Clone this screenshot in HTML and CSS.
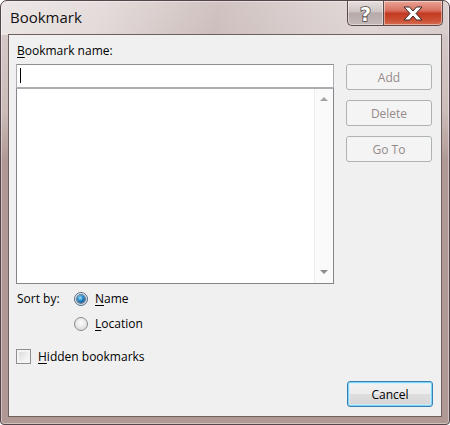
FILE: index.html
```html
<!DOCTYPE html>
<html>
<head>
  <meta name="viewport" content="width=device-width, initial-scale=1.0">
  <title>Bookmark</title>
  <link rel="stylesheet" href="styles.css">
</head>
<body>
  <div class="window">
    <div class="titlebar">
      <span class="title">Bookmark</span>
      <div class="caption-buttons">
        <button class="cap help">?</button>
        <button class="cap close">
          <svg width="22" height="15" viewBox="0 0 22 15">
            <path d="M2 1 H7.5 L11 5 L14.5 1 H20 L14 7.5 L20 14 H14.5 L11 10 L7.5 14 H2 L8 7.5 Z" fill="#fff" stroke="#3a2a28" stroke-width="1" stroke-linejoin="round"/>
          </svg>
        </button>
      </div>
    </div>

    <div class="client">
      <div class="main">
        <div class="left">
          <div class="field-label"><u>B</u>ookmark name:</div>
          <div class="name-input"><span class="caret"></span></div>
          <div class="listbox">
            <div class="scroll">
              <span class="arrow up"></span>
              <span class="arrow down"></span>
            </div>
          </div>
        </div>
        <div class="actions">
          <button class="btn" disabled>Add</button>
          <button class="btn" disabled>Delete</button>
          <button class="btn" disabled>Go To</button>
        </div>
      </div>

      <div class="sort">
        <span class="sort-label">Sort by:</span>
        <div class="radios">
          <label class="option"><span class="radio checked"></span><span><u>N</u>ame</span></label>
          <label class="option"><span class="radio"></span><span><u>L</u>ocation</span></label>
        </div>
      </div>

      <label class="option hidden-row"><span class="checkbox"></span><span><u>H</u>idden bookmarks</span></label>

      <div class="footer">
        <button class="btn default">Cancel</button>
      </div>
    </div>
  </div>
</body>
</html>
```

FILE: styles.css
```css
* {
  box-sizing: border-box;
}

body {
  margin: 0;
  font-family: "Open Sans", "Noto Sans", Arial, sans-serif;
  font-size: 12px;
  color: #000;
  background: #fff;
}

u {
  text-decoration: underline;
  text-underline-offset: 2px;
}

/* window frame */
.window {
  width: 450px;
  height: 425px;
  display: flex;
  flex-direction: column;
  border: 1px solid #54464a;
  border-radius: 7px 7px 4px 4px;
  box-shadow: inset 0 0 0 1px rgba(255, 255, 255, 0.4);
  background:
    linear-gradient(to bottom, rgba(255, 255, 255, 0.5) 0, rgba(255, 255, 255, 0.35) 110px, rgba(255, 255, 255, 0) 160px),
    linear-gradient(100deg, #d9cfcd 0%, #cbbcb9 22%, #a28884 48%, #b29d9a 62%, #c4b4b1 82%, #b5a19e 100%) top / 100% 34px no-repeat,
    #b09995;
  overflow: hidden;
}

.titlebar {
  height: 33px;
  display: flex;
  align-items: flex-start;
}

.title {
  padding: 7px 0 0 9px;
  font-size: 15px;
  line-height: 18px;
  color: #111;
}

.caption-buttons {
  margin-left: auto;
  margin-right: 6px;
  display: flex;
}

.cap {
  height: 25px;
  margin: 0;
  padding: 0;
  border: 1px solid #5d4b49;
  border-top: none;
  display: flex;
  align-items: center;
  justify-content: center;
  box-shadow: inset 0 0 0 1px rgba(255, 255, 255, 0.45);
}

.help {
  width: 36px;
  border-right: none;
  border-radius: 0 0 0 5px;
  background: linear-gradient(#e6dfde 0%, #cdc4c3 45%, #b5aaa9 50%, #c3bab9 100%);
  font-family: "DejaVu Sans", sans-serif;
  font-weight: bold;
  font-size: 19px;
  color: #fff;
  -webkit-text-stroke: 1.5px #4a3e3d;
  paint-order: stroke fill;
  padding-top: 1px;
}

.close {
  width: 60px;
  border-radius: 0 0 5px 0;
  background: linear-gradient(#eaa596 0%, #d87060 40%, #c23a22 52%, #cc5034 80%, #d86e52 100%);
}

/* client area */
.client {
  flex: 1;
  margin: 0 7px 7px 7px;
  border: 1px solid #6f5f5d;
  background: #f0f0f0;
  padding: 8px 8px 9px 7px;
  display: flex;
  flex-direction: column;
}

.main {
  display: flex;
  gap: 12px;
}

.left {
  width: 318px;
}

.field-label {
  height: 16px;
  line-height: 16px;
  padding-left: 1px;
  margin-bottom: 5px;
}

.name-input {
  height: 24px;
  background: #fff;
  border: 1px solid #abadb3;
  border-top-color: #8e8f8f;
  padding: 3px 0 0 3px;
}

.caret {
  display: block;
  width: 1px;
  height: 15px;
  background: #000;
}

.listbox {
  height: 196px;
  background: #fff;
  border: 1px solid #82878c;
  border-top-color: #abadb3;
  display: flex;
  justify-content: flex-end;
}

.scroll {
  width: 19px;
  background: #fafafa;
  border-left: 1px solid #ededed;
  display: flex;
  flex-direction: column;
  justify-content: space-between;
  align-items: center;
  padding: 8px 0 9px 0;
}

.arrow {
  width: 0;
  height: 0;
  border-left: 4px solid transparent;
  border-right: 4px solid transparent;
}

.arrow.up {
  border-bottom: 4px solid #a3a3a3;
}

.arrow.down {
  border-top: 4px solid #8c8c8c;
}

.actions {
  width: 86px;
  margin-top: 21px;
  display: flex;
  flex-direction: column;
  gap: 10px;
}

.btn {
  height: 26px;
  width: 86px;
  margin: 0;
  font-family: inherit;
  font-size: 12px;
  border-radius: 3px;
  border: 1px solid #adb2b5;
  background: #f4f4f4;
  color: #958a8a;
  padding: 0;
}

.btn.default {
  color: #000;
  border-color: #3c7fb1;
  box-shadow: inset 0 0 0 1px #7bd6f7, inset 0 0 0 2px rgba(200, 240, 255, 0.6);
  background: linear-gradient(#f3f3f3 0%, #ececec 48%, #dedede 52%, #d6d6d6 100%);
}

/* sort options */
.sort {
  display: flex;
  margin-top: 6px;
}

.sort-label {
  width: 58px;
  padding-left: 1px;
  line-height: 17px;
}

.radios {
  display: flex;
  flex-direction: column;
  gap: 8px;
}

.option {
  display: flex;
  align-items: center;
  gap: 7px;
  height: 17px;
  line-height: 17px;
}

.radio {
  width: 14px;
  height: 14px;
  border-radius: 50%;
  border: 1px solid #8a8a8a;
  background: radial-gradient(circle at 50% 40%, #fdfdfd 0%, #e6e6e6 55%, #cfcfcf 100%);
  display: flex;
  align-items: center;
  justify-content: center;
}

.radio.checked {
  border-color: #4f6f8c;
}

.radio.checked::after {
  content: "";
  width: 8px;
  height: 8px;
  border-radius: 50%;
  background: radial-gradient(circle at 40% 35%, #9fe2ff 0%, #2b8bcb 40%, #0b3f6a 100%);
  box-shadow: 0 0 0 1px rgba(20, 50, 80, 0.6);
}

.hidden-row {
  margin-top: 16px;
}

.checkbox {
  width: 15px;
  height: 15px;
  border: 1px solid #8e8f8f;
  background: linear-gradient(135deg, #d4d4d4 0%, #ececec 50%, #fafafa 100%);
  box-shadow: inset 0 0 0 2px #f4f4f4;
}

.footer {
  margin-top: auto;
  display: flex;
  justify-content: flex-end;
}
```
